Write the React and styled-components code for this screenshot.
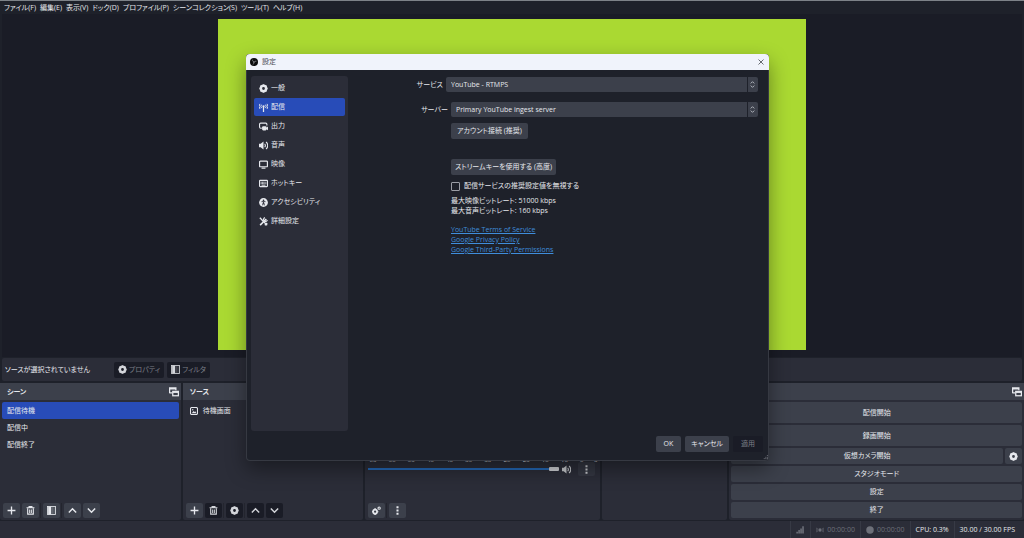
import React, { useState } from 'react';
import styled, { createGlobalStyle, css } from 'styled-components';

const colors = {
    window: '#1e212a',
    preview: '#1a1c26',
    base: '#2b2d38',
    raised: '#3c404b',
    sunken: '#1a1c26',
    primary: '#284cb8',
    text: '#e6e8ed',
    muted: '#7b7e87',
    link: '#3f8ddb',
    canvas: '#aad932',
};

const GlobalStyle = createGlobalStyle`
    * { box-sizing: border-box; }
    body {
        margin: 0;
        background: ${colors.window};
        color: ${colors.text};
        font: 7px/10px "Open Sans", "Noto Sans CJK JP", sans-serif;
        font-feature-settings: "palt";
    }
    button, select, input { font: inherit; font-feature-settings: inherit; color: inherit; }
    ul, p { margin: 0; padding: 0; list-style: none; }
`;

// ---- icons ----

const Svg = styled.svg`
    display: block;
    flex: none;
    width: ${(p) => p.$size || 9}px;
    height: ${(p) => p.$size || 9}px;
    fill: none;
    stroke: currentColor;
    stroke-width: 2;
`;

const ICONS = {
    gear: (
        <>
            <circle cx="8" cy="8" r="4.5" strokeWidth="4" />
            <path d="M8 .6v2M8 13.4v2M.6 8h2M13.4 8h2M2.7 2.7l1.5 1.5M11.8 11.8l1.5 1.5M2.7 13.3l1.5-1.5M11.8 4.200l1.5-1.5" strokeWidth="3.6" />
        </>
    ),
    antenna: (
        <>
            <path d="M8 6v10" strokeWidth="2.200" />
            <circle cx="8" cy="6" r="2" fill="currentColor" stroke="none" />
            <path d="M4.500 9a4.500 4.500 0 0 1 0-6M11.500 9a4.500 4.500 0 0 0 0-6M1.700 10.500a7.500 7.500 0 0 1 0-9M14.300 10.500a7.500 7.500 0 0 0 0-9" strokeWidth="1.700" />
        </>
    ),
    output: (
        <>
            <path d="M5 11H3a2 2 0 0 1-2-2V4a2 2 0 0 1 2-2h9a2 2 0 0 1 2 2v2" />
            <rect x="5.500" y="7.500" width="8" height="7.500" rx="2" fill="currentColor" stroke="none" />
            <path d="M12.500 10.500L16 8v6.500l-3.500-2z" fill="currentColor" stroke="none" />
        </>
    ),
    speaker: (
        <>
            <path d="M0 5h3l5-4v14l-5-4H0z" fill="currentColor" stroke="none" />
            <path d="M10 5a4 4 0 0 1 0 6M12.500 1.800a8 8 0 0 1 0 12.400" />
        </>
    ),
    monitor: (
        <>
            <rect x="1" y="2" width="14" height="10" rx="1.500" strokeWidth="2.200" />
            <path d="M4.500 14.500h7" />
        </>
    ),
    keyboard: (
        <>
            <rect x="1" y="2.500" width="14" height="11" rx="1" />
            <path d="M3 5.800h10M3 8.300h10" strokeWidth="1.700" strokeDasharray="1.800 .500" />
            <path d="M4.500 11h7" strokeWidth="1.700" />
        </>
    ),
    access: (
        <>
            <circle cx="8" cy="8" r="7.800" fill="currentColor" stroke="none" />
            <circle cx="8" cy="4" r="1.500" fill={colors.base} stroke="none" />
            <path d="M4.500 6.500h7M8 6.500v4M6.500 13l.700-4M9.500 13l-.700-4" stroke={colors.base} strokeWidth="1.600" />
        </>
    ),
    tools: (
        <>
            <path d="M2 14.500L13 3.500" strokeWidth="2.800" />
            <path d="M1.500 1.500l13 13" strokeWidth="2.400" />
            <path d="M10.500 14.500l4-4" strokeWidth="2.600" />
            <path d="M10.500 1A3.500 3.500 0 1 0 15 5.500" strokeWidth="2.200" />
        </>
    ),
    plus: <path d="M8 1v14M1 8h14" strokeWidth="2.400" />,
    trash: (
        <>
            <path d="M1 3h14M5.500 2.500V1h5v1.500" />
            <path d="M3 4v10.500h10V4" />
            <path d="M6.500 6v6.500M9.500 6v6.500" strokeWidth="1.800" />
        </>
    ),
    filter: (
        <>
            <rect x="1" y="1" width="14" height="14" strokeWidth="1.500" />
            <rect x="2" y="1" width="5.500" height="14" fill="currentColor" stroke="none" />
            <path d="M10 2v12M12.500 2v12" strokeWidth="1.200" opacity=".4" />
        </>
    ),
    up: <path d="M1.500 11.500L8 5l6.500 6.500" strokeWidth="2.600" />,
    down: <path d="M1.500 4.500L8 11l6.500-6.500" strokeWidth="2.600" />,
    dots: <path d="M8 .500v3.500M8 6.200v3.500M8 12v3.500" strokeWidth="3.600" />,
    gears: (
        <>
            <circle cx="5.500" cy="10" r="3.500" strokeWidth="3" />
            <circle cx="12.700" cy="3.800" r="2" strokeWidth="1.900" />
            <path d="M5.500 4v1.500M5.500 14.300v1.700M0 10h1.500M9.500 10h1.700" strokeWidth="2.500" />
        </>
    ),
    popout: (
        <>
            <path d="M1 10V1.500h10V5M1 3h10M1 9.200h4" />
            <rect x="6" y="7" width="9" height="7" />
            <path d="M6 8.500h9" />
        </>
    ),
    image: (
        <>
            <rect x="1" y="1" width="14" height="14" rx="2.500" strokeWidth="2.200" />
            <path d="M3.500 12.500l3.500-4.500 2 2 1.500-1.500 2.500 4z" fill="currentColor" stroke="none" />
            <circle cx="5.500" cy="5.500" r="1.300" fill="currentColor" stroke="none" />
        </>
    ),
    close: <path d="M3 3l10 10M13 3L3 13" strokeWidth="1.600" />,
    bars: <path d="M2 15v-3M5.500 15v-6M9 15V6M12.500 15V2" strokeWidth="2.800" />,
    live: (
        <>
            <circle cx="8" cy="8" r="3.300" fill="currentColor" stroke="none" />
            <path d="M3.500 4.500a5 5 0 0 0 0 7M12.500 4.500a5 5 0 0 1 0 7M1 3.500a8 8 0 0 0 0 9M15 3.500a8 8 0 0 1 0 9" strokeWidth="1.200" />
        </>
    ),
    record: <circle cx="8" cy="8" r="7.500" fill="currentColor" stroke="none" />,
    updown: <path d="M4 5.500L8 1.500l4 4M4 10.500l4 4 4-4" strokeWidth="2.200" />,
    grip: <path d="M14 1v2M14 6v2M14 11v2M9 6v2M9 11v2M4 11v2" strokeWidth="3" />,
    obs: (
        <>
            <circle cx="8" cy="8" r="8" fill="#0b0b0d" stroke="none" />
            <path d="M5 3.500c0 2.500 1.500 4 4 4M12.800 6.500c-2.500-.500-4.300.800-4.700 3.200M6 13c1.800-1.600 2-3.800.500-5.500" stroke="#a9acb2" strokeWidth="1.300" />
        </>
    ),
};

const Icon = ({ name, size }) => (
    <Svg viewBox="0 0 16 16" $size={size} aria-hidden="true">{ICONS[name]}</Svg>
);

// ---- main window ----

const Window = styled.div`
    position: relative;
    display: flex;
    flex-direction: column;
    height: 100vh;
    overflow: hidden;
    border-top: 1px solid #7d8288;
`;

const MenuBar = styled.nav`
    display: flex;
    gap: 4px;
    padding: 2px 4px 1px;
`;

const MenuButton = styled.button`
    padding: 0;
    border: 0;
    background: none;
    white-space: nowrap;
`;

const Preview = styled.main`
    display: flex;
    flex: 1;
    justify-content: center;
    min-height: 0;
    margin: 0 2px;
    padding: 5px 0 7px;
    background: ${colors.preview};
`;

const Canvas = styled.div`
    aspect-ratio: 16 / 9;
    background: ${colors.canvas};
`;

const ContextBar = styled.div`
    display: flex;
    align-items: center;
    gap: 3px;
    height: 23px;
    margin: 1px 2px 2px;
    padding: 0 3px;
    border-radius: 2px;
    background: ${colors.base};
`;

const ContextText = styled.span`
    width: 106px;
    white-space: nowrap;
`;

const Button = styled.button`
    display: flex;
    align-items: center;
    justify-content: center;
    gap: 2px;
    height: ${(p) => p.$height || 16}px;
    padding: 0 ${(p) => p.$pad || 8}px;
    border: 0;
    border-radius: 2px;
    background: ${colors.raised};
    white-space: nowrap;

    &:disabled {
        background: ${colors.sunken};
        color: ${colors.muted};
    }

    &:disabled svg {
        color: #d3d5da;
    }
`;

const Docks = styled.div`
    display: grid;
    grid-template-columns: 181fr 180fr 236fr 125fr 295fr;
    gap: 2px;
    height: 137px;
`;

const Dock = styled.section`
    display: flex;
    flex-direction: column;
    min-width: 0;
    border-radius: 2px;
    background: ${colors.base};
`;

const DockTitle = styled.h2`
    display: flex;
    align-items: center;
    justify-content: space-between;
    height: 17px;
    margin: 0;
    padding: 0 2px 0 7px;
    background: ${colors.raised};
    font-size: 7px;
    font-weight: 700;
`;

const List = styled.ul`
    flex: 1;
    padding: 2px;
`;

const ListItem = styled.li`
    display: flex;
    align-items: center;
    gap: 5px;
    height: 17px;
    padding: 0 5px;
    border-radius: 2px;
    background: ${(p) => (p.$active ? colors.primary : 'transparent')};
`;

const Toolbar = styled.div`
    display: flex;
    gap: 1px;
    padding: 0 4px 2px 3px;
`;

const ToolGroup = styled.div`
    display: flex;
    gap: 2px;

    & + & {
        padding-left: 2px;
        border-left: 1px solid #23252e;
    }
`;

const ToolButton = styled(Button)`
    width: 17px;
    height: 15px;
    padding: 0;
`;

const Mixer = styled.div`
    display: flex;
    flex: 1;
    flex-direction: column;
    padding: 55px 3px 0;
`;

const Ticks = styled.div`
    display: flex;
    justify-content: space-between;
    height: 7px;
    font-size: 6px;
`;

const VolumeRow = styled.div`
    display: flex;
    align-items: center;
    gap: 3px;
    color: #c8cace;
`;

const Volume = styled.input`
    flex: 1;
    min-width: 0;
    height: 4px;
    margin: 0;
    appearance: none;
    background: linear-gradient(#2468b6, #2468b6) center / 100% 2px no-repeat;

    &::-webkit-slider-thumb {
        appearance: none;
        width: 10px;
        height: 4px;
        border-radius: 1px;
        background: #d0d2d6;
    }
`;

const RowMenu = styled(ToolButton)`
    height: 14px;
    margin: 0 2px 0 4px;
    background: #343742;
`;

const Controls = styled.div`
    display: flex;
    flex-direction: column;
    gap: 2px;
    padding: 2px;
`;

const ControlRow = styled.div`
    display: flex;
    gap: 2px;
`;

const ControlButton = styled(Button)`
    flex: 1 0 auto;
`;

const StatusBar = styled.footer`
    display: flex;
    justify-content: flex-end;
    height: 17px;
    margin-top: 1px;
    padding-right: 4px;
    background: ${colors.base};
`;

const StatusItem = styled.span`
    display: flex;
    align-items: center;
    gap: 3px;
    padding: 0 5px;
    border-left: 1px solid #373a45;
    color: ${(p) => (p.$dim ? '#6d7079' : colors.text)};
`;

// ---- settings dialog ----

const Dialog = styled.section`
    position: absolute;
    top: 53px;
    right: 255px;
    bottom: 77px;
    left: 246px;
    display: flex;
    flex-direction: column;
    overflow: hidden;
    border-radius: 4px;
    background: ${colors.window};
    box-shadow: inset 0 0 0 1px #363942, 0 8px 20px rgba(0, 0, 0, 0.4);
`;

const TitleBar = styled.header`
    display: flex;
    align-items: center;
    gap: 4px;
    height: 16px;
    padding: 0 4px;
    background: #f0f3fb;
    color: #4a4c53;
`;

const CloseButton = styled.button`
    margin-left: auto;
    padding: 0;
    border: 0;
    background: none;
    color: #44464c;
`;

const DialogBody = styled.div`
    display: flex;
    flex: 1;
    padding: 6px 11px 5px 5px;
`;

const Sidebar = styled.nav`
    display: flex;
    flex: none;
    flex-direction: column;
    gap: 1px;
    width: 97px;
    padding: 3px;
    border-radius: 3px;
    background: ${colors.base};
`;

const SideItem = styled.button`
    display: flex;
    align-items: center;
    gap: 3px;
    height: 18px;
    padding: 0 5px;
    border: 0;
    border-radius: 2px;
    background: none;
    ${(p) => p.$active && css`
        background: ${colors.primary};
    `}
`;

const Form = styled.form`
    flex: 1;
    padding-top: 1px;
`;

const Field = styled.div`
    display: flex;
    align-items: center;
    gap: 3px;
    margin-bottom: ${(p) => p.$after}px;
`;

const FieldLabel = styled.label`
    width: ${(p) => p.$width}px;
    text-align: right;
`;

const SelectBox = styled.div`
    display: grid;
    flex: 1;
    grid-template-columns: 1fr 11px;
    align-items: center;
    height: 15px;
    border-radius: 2px;
    background: ${colors.raised};

    svg {
        grid-area: 1 / 2;
        justify-self: center;
        color: #b5b8bf;
        pointer-events: none;
    }
`;

const Select = styled.select`
    grid-area: 1 / 1 / 2 / 3;
    width: 100%;
    height: 15px;
    padding: 0 5px;
    border: 0;
    border-radius: 2px;
    appearance: none;
    background: linear-gradient(${colors.window}, ${colors.window}) right 10px top / 1px 100% no-repeat;
`;

const FormContent = styled.div`
    display: flex;
    flex-direction: column;
    align-items: flex-start;
    padding-left: 103px;
`;

const KeyButton = styled(Button)`
    margin: 20px 0 6px;
`;

const CheckLabel = styled.label`
    display: flex;
    align-items: center;
    gap: 4px;
    margin-bottom: 5px;
`;

const Checkbox = styled.input`
    width: 9px;
    height: 9px;
    margin: 0;
    border: 1px solid #9a9da5;
    border-radius: 1px;
    appearance: none;

    &:checked {
        background: ${colors.primary};
    }
`;

const Links = styled.div`
    display: flex;
    flex-direction: column;
    margin-top: 9px;
`;

const Link = styled.a`
    color: ${colors.link};
`;

const DialogFooter = styled.footer`
    display: flex;
    justify-content: flex-end;
    gap: 4px;
    padding: 0 6px 9px;
`;

const Grip = styled.span`
    position: absolute;
    right: 1px;
    bottom: 1px;
    color: #9a9da5;
`;

const MENUS = ['ファイル(F)', '編集(E)', '表示(V)', 'ドック(D)', 'プロファイル(P)', 'シーンコレクション(S)', 'ツール(T)', 'ヘルプ(H)'];

const SCENES = ['配信待機', '配信中', '配信終了'];

const TICKS = [-60, -55, -50, -45, -40, -35, -30, -25, -20, -15, -10, -5, 0];

const PAGES = [
    ['gear', '一般'],
    ['antenna', '配信'],
    ['output', '出力'],
    ['speaker', '音声'],
    ['monitor', '映像'],
    ['keyboard', 'ホットキー'],
    ['access', 'アクセシビリティ'],
    ['tools', '詳細設定'],
];

const LINKS = ['YouTube Terms of Service', 'Google Privacy Policy', 'Google Third-Party Permissions'];

const Tool = ({ icon, label, disabled }) => (
    <ToolButton type="button" aria-label={label} disabled={disabled}>
        <Icon name={icon} />
    </ToolButton>
);

const SettingsDialog = () => {
    const [page, setPage] = useState('配信');

    return (
        <Dialog role="dialog" aria-label="設定">
            <TitleBar>
                <Icon name="obs" size={8} />
                設定
                <CloseButton type="button" aria-label="閉じる"><Icon name="close" size={8} /></CloseButton>
            </TitleBar>
            <DialogBody>
                <Sidebar>
                    {PAGES.map(([icon, name]) => (
                        <SideItem key={name} type="button" $active={name === page} onClick={() => setPage(name)}>
                            <Icon name={icon} />
                            {name}
                        </SideItem>
                    ))}
                </Sidebar>
                <Form>
                    <Field $after={10}>
                        <FieldLabel htmlFor="service" $width={95}>サービス</FieldLabel>
                        <SelectBox>
                            <Select id="service"><option>YouTube - RTMPS</option></Select>
                            <Icon name="updown" size={7} />
                        </SelectBox>
                    </Field>
                    <Field $after={6}>
                        <FieldLabel htmlFor="server" $width={100}>サーバー</FieldLabel>
                        <SelectBox>
                            <Select id="server"><option>Primary YouTube ingest server</option></Select>
                            <Icon name="updown" size={7} />
                        </SelectBox>
                    </Field>
                    <FormContent>
                        <Button type="button" $pad={6}>アカウント接続 (推奨)</Button>
                        <KeyButton type="button" $pad={4}>ストリームキーを使用する (高度)</KeyButton>
                        <CheckLabel>
                            <Checkbox type="checkbox" />
                            配信サービスの推奨設定値を無視する
                        </CheckLabel>
                        <p>最大映像ビットレート: 51000 kbps</p>
                        <p>最大音声ビットレート: 160 kbps</p>
                        <Links>
                            {LINKS.map((text) => <Link key={text} href="#">{text}</Link>)}
                        </Links>
                    </FormContent>
                </Form>
            </DialogBody>
            <DialogFooter>
                <Button type="button">OK</Button>
                <Button type="button" $pad={6}>キャンセル</Button>
                <Button type="button" disabled>適用</Button>
            </DialogFooter>
            <Grip><Icon name="grip" size={5} /></Grip>
        </Dialog>
    );
};

const App = () => {
    const [scene, setScene] = useState('配信待機');

    return (
        <Window>
            <GlobalStyle />
            <MenuBar>
                {MENUS.map((name) => <MenuButton key={name} type="button">{name}</MenuButton>)}
            </MenuBar>
            <Preview><Canvas /></Preview>
            <ContextBar>
                <ContextText>ソースが選択されていません</ContextText>
                <Button type="button" disabled $pad={4}><Icon name="gear" />プロパティ</Button>
                <Button type="button" disabled $pad={4}><Icon name="filter" />フィルタ</Button>
            </ContextBar>
            <Docks>
                <Dock>
                    <DockTitle>シーン<Icon name="popout" size={10} /></DockTitle>
                    <List>
                        {SCENES.map((name) => (
                            <ListItem key={name} $active={name === scene} onClick={() => setScene(name)}>{name}</ListItem>
                        ))}
                    </List>
                    <Toolbar>
                        <ToolGroup>
                            <Tool icon="plus" label="シーンを追加" />
                            <Tool icon="trash" label="シーンを削除" />
                        </ToolGroup>
                        <ToolGroup><Tool icon="filter" label="シーンフィルタ" /></ToolGroup>
                        <ToolGroup>
                            <Tool icon="up" label="上へ移動" />
                            <Tool icon="down" label="下へ移動" />
                        </ToolGroup>
                    </Toolbar>
                </Dock>
                <Dock>
                    <DockTitle>ソース</DockTitle>
                    <List>
                        <ListItem><Icon name="image" size={8} />待機画面</ListItem>
                    </List>
                    <Toolbar>
                        <ToolGroup>
                            <Tool icon="plus" label="ソースを追加" />
                            <Tool icon="trash" label="ソースを削除" disabled />
                        </ToolGroup>
                        <ToolGroup><Tool icon="gear" label="ソースのプロパティ" disabled /></ToolGroup>
                        <ToolGroup>
                            <Tool icon="up" label="上へ移動" disabled />
                            <Tool icon="down" label="下へ移動" disabled />
                        </ToolGroup>
                    </Toolbar>
                </Dock>
                <Dock>
                    <DockTitle />
                    <Mixer>
                        <Ticks>{TICKS.map((n) => <span key={n}>{n}</span>)}</Ticks>
                        <VolumeRow>
                            <Volume type="range" min="0" max="100" defaultValue="100" aria-label="音量" />
                            <Icon name="speaker" size={9} />
                            <RowMenu type="button" aria-label="音声メニュー"><Icon name="dots" /></RowMenu>
                        </VolumeRow>
                    </Mixer>
                    <Toolbar>
                        <ToolGroup><Tool icon="gears" label="オーディオの詳細" /></ToolGroup>
                        <ToolGroup><Tool icon="dots" label="ミキサーメニュー" /></ToolGroup>
                    </Toolbar>
                </Dock>
                <Dock><DockTitle /></Dock>
                <Dock>
                    <DockTitle><span /><Icon name="popout" size={10} /></DockTitle>
                    <Controls>
                        <ControlButton type="button" $height={21}>配信開始</ControlButton>
                        <ControlButton type="button" $height={21}>録画開始</ControlButton>
                        <ControlRow>
                            <ControlButton type="button">仮想カメラ開始</ControlButton>
                            <Button type="button" aria-label="仮想カメラの設定" $pad={4}><Icon name="gear" /></Button>
                        </ControlRow>
                        <ControlButton type="button">スタジオモード</ControlButton>
                        <ControlButton type="button">設定</ControlButton>
                        <ControlButton type="button">終了</ControlButton>
                    </Controls>
                </Dock>
            </Docks>
            <StatusBar>
                <StatusItem $dim><Icon name="bars" /></StatusItem>
                <StatusItem $dim><Icon name="live" size={8} />00:00:00</StatusItem>
                <StatusItem $dim><Icon name="record" size={8} />00:00:00</StatusItem>
                <StatusItem>CPU: 0.3%</StatusItem>
                <StatusItem>30.00 / 30.00 FPS</StatusItem>
            </StatusBar>
            <SettingsDialog />
        </Window>
    );
};

export default App;
